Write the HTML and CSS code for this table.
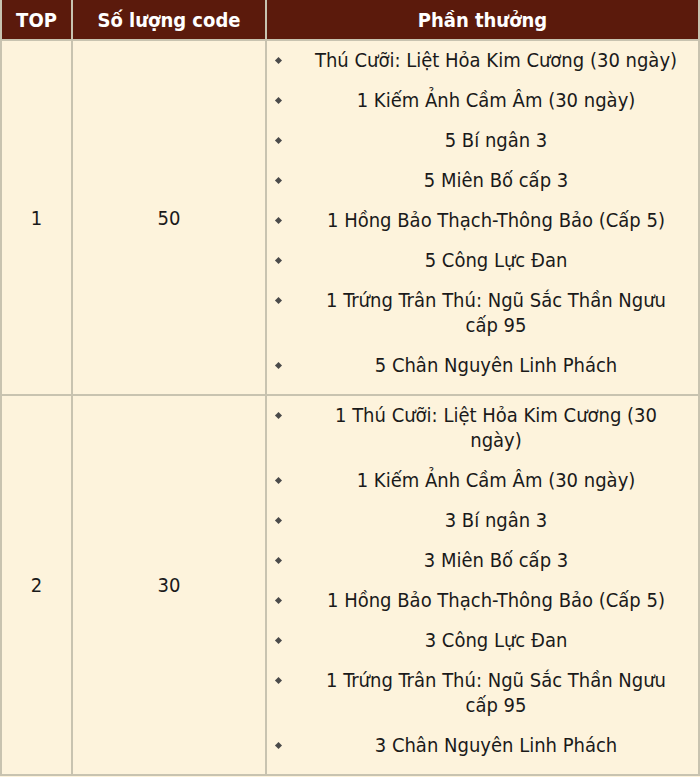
FILE: index.html
```html
<!DOCTYPE html>
<html lang="vi">
<head>
<meta charset="utf-8">
<link rel="stylesheet" href="styles.css">
</head>
<body>
<table class="rank">
  <colgroup>
    <col class="c-top">
    <col class="c-code">
    <col class="c-reward">
  </colgroup>
  <thead>
    <tr><th>TOP</th><th>Số lượng code</th><th>Phần thưởng</th></tr>
  </thead>
  <tbody>
    <tr>
      <td class="num">1</td>
      <td class="num">50</td>
      <td class="rewards">
        <ul>
          <li><span class="dot"></span><span class="txt">Thú Cưỡi: Liệt Hỏa Kim Cương (30 ngày)</span></li>
          <li><span class="dot"></span><span class="txt">1 Kiếm Ảnh Cầm Âm (30 ngày)</span></li>
          <li><span class="dot"></span><span class="txt">5 Bí ngân 3</span></li>
          <li><span class="dot"></span><span class="txt">5 Miên Bố cấp 3</span></li>
          <li><span class="dot"></span><span class="txt">1 Hồng Bảo Thạch-Thông Bảo (Cấp 5)</span></li>
          <li><span class="dot"></span><span class="txt">5 Công Lực Đan</span></li>
          <li><span class="dot"></span><span class="txt">1 Trứng Trân Thú: Ngũ Sắc Thần Ngưu cấp 95</span></li>
          <li><span class="dot"></span><span class="txt">5 Chân Nguyên Linh Phách</span></li>
        </ul>
      </td>
    </tr>
    <tr>
      <td class="num">2</td>
      <td class="num">30</td>
      <td class="rewards">
        <ul>
          <li><span class="dot"></span><span class="txt">1 Thú Cưỡi: Liệt Hỏa Kim Cương (30 ngày)</span></li>
          <li><span class="dot"></span><span class="txt">1 Kiếm Ảnh Cầm Âm (30 ngày)</span></li>
          <li><span class="dot"></span><span class="txt">3 Bí ngân 3</span></li>
          <li><span class="dot"></span><span class="txt">3 Miên Bố cấp 3</span></li>
          <li><span class="dot"></span><span class="txt">1 Hồng Bảo Thạch-Thông Bảo (Cấp 5)</span></li>
          <li><span class="dot"></span><span class="txt">3 Công Lực Đan</span></li>
          <li><span class="dot"></span><span class="txt">1 Trứng Trân Thú: Ngũ Sắc Thần Ngưu cấp 95</span></li>
          <li><span class="dot"></span><span class="txt">3 Chân Nguyên Linh Phách</span></li>
        </ul>
      </td>
    </tr>
  </tbody>
</table>
</body>
</html>
```
FILE: styles.css
```css
html, body {
  margin: 0;
  padding: 0;
  background: #fdf3dc;
}
body {
  font-family: "DejaVu Sans Condensed", "DejaVu Sans", sans-serif;
  font-size: 20px;
  color: #1a1a1a;
}
.rank {
  width: 700px;
  border-collapse: collapse;
  table-layout: fixed;
  background: #fdf3dc;
}
.c-top { width: 71px; }
.c-code { width: 194px; }
.rank th {
  background: #5b1a0c;
  color: #ffffff;
  font-weight: bold;
  height: 39px;
  padding: 0;
  text-align: center;
  line-height: 24px;
  border: 2px solid #c8c3b0;
  border-top: 0;
}
.rank thead th + th {
  border-left-color: #7a4030;
}
.rank td {
  border: 2px solid #c8c3b0;
  padding: 0;
  vertical-align: middle;
}
.num {
  text-align: center;
}
.rewards ul {
  list-style: none;
  margin: 0 0 8px;
  padding: 0;
}
.rewards li {
  display: flex;
  align-items: flex-start;
  padding: 7px 0 8px;
  line-height: 25px;
}
.dot {
  flex: none;
  width: 5px;
  height: 5px;
  margin: 10px 0 0 9px;
  background: #4a4a4a;
  transform: rotate(45deg);
}
.txt {
  flex: 1;
  text-align: center;
  margin: 0 17px 0 30px;
}
```
